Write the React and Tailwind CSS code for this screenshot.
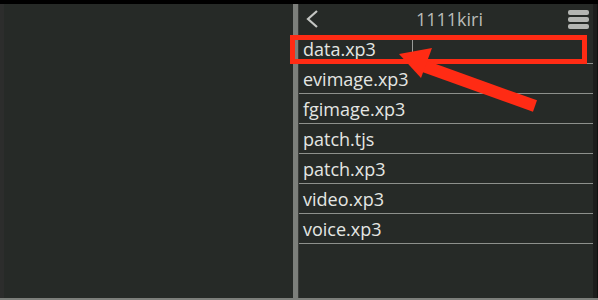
const files = [
  "data.xp3",
  "evimage.xp3",
  "fgimage.xp3",
  "patch.tjs",
  "patch.xp3",
  "video.xp3",
  "voice.xp3",
];

const Hamburger = () => (
  <div className="flex flex-col gap-[2px] w-[21px]">
    <div className="h-[5px] rounded-[2px] bg-[#b4b6b3]" />
    <div className="h-[5px] rounded-[2px] bg-[#b4b6b3]" />
    <div className="h-[5px] rounded-[2px] bg-[#b4b6b3]" />
  </div>
);

const FileRow = ({ name, first }) => (
  <div className="relative h-[30px] flex items-end border-b border-[#8d908c] pl-[4px] pb-[3px]">
    <span className="text-[18px] leading-[22px] text-[#e4e6e3]">{name}</span>
    {first && (
      <div className="absolute left-[113px] top-[2px] h-[25px] w-px bg-[#9a9c99]" />
    )}
  </div>
);

export default function App() {
  return (
    <div
      className="relative w-[598px] h-[300px] bg-[#1c1d1c] flex flex-col overflow-hidden"
      style={{ fontFamily: '"Open Sans", "Noto Sans", sans-serif' }}
    >
      <div className="h-[4px] bg-black" />
      <div className="flex flex-1">
        {/* left pane */}
        <div className="w-[293px] bg-[#262a27] border-l-[4px] border-[#2c2d2c]" />
        {/* divider */}
        <div className="w-[6px] bg-[#7c7f7b] border-r border-[#3a3c3a]" />
        {/* right pane */}
        <div className="flex-1 flex flex-col bg-[#262a27] mr-[4px]">
          <div className="h-[30px] flex items-center justify-between pl-[6px] pr-[4px]">
            <svg width="14" height="20" viewBox="0 0 14 20">
              <path
                d="M12 2 L3 10 L12 18"
                fill="none"
                stroke="#c4c6c3"
                strokeWidth="2.2"
              />
            </svg>
            <span className="text-[18px] text-[#b9bbb8] pl-[12px]">1111kiri</span>
            <Hamburger />
          </div>
          <div className="flex flex-col">
            {files.map((f, i) => (
              <FileRow key={f} name={f} first={i === 0} />
            ))}
          </div>
        </div>
        <div className="w-px bg-[#101110]" />
      </div>
      <div className="h-[2px] bg-[#7c7f7b]" />

      {/* annotation: red box + arrow */}
      <div className="absolute left-[290px] top-[35px] w-[297px] h-[29px] border-[5px] border-[#ff2b14]" />
      <svg
        className="absolute left-0 top-0"
        width="598"
        height="300"
        viewBox="0 0 598 300"
      >
        <line
          x1="535"
          y1="106"
          x2="418"
          y2="64"
          stroke="#ff2b14"
          strokeWidth="12"
        />
        <polygon points="399,54 432,48 421,78" fill="#ff2b14" />
      </svg>
    </div>
  );
}
